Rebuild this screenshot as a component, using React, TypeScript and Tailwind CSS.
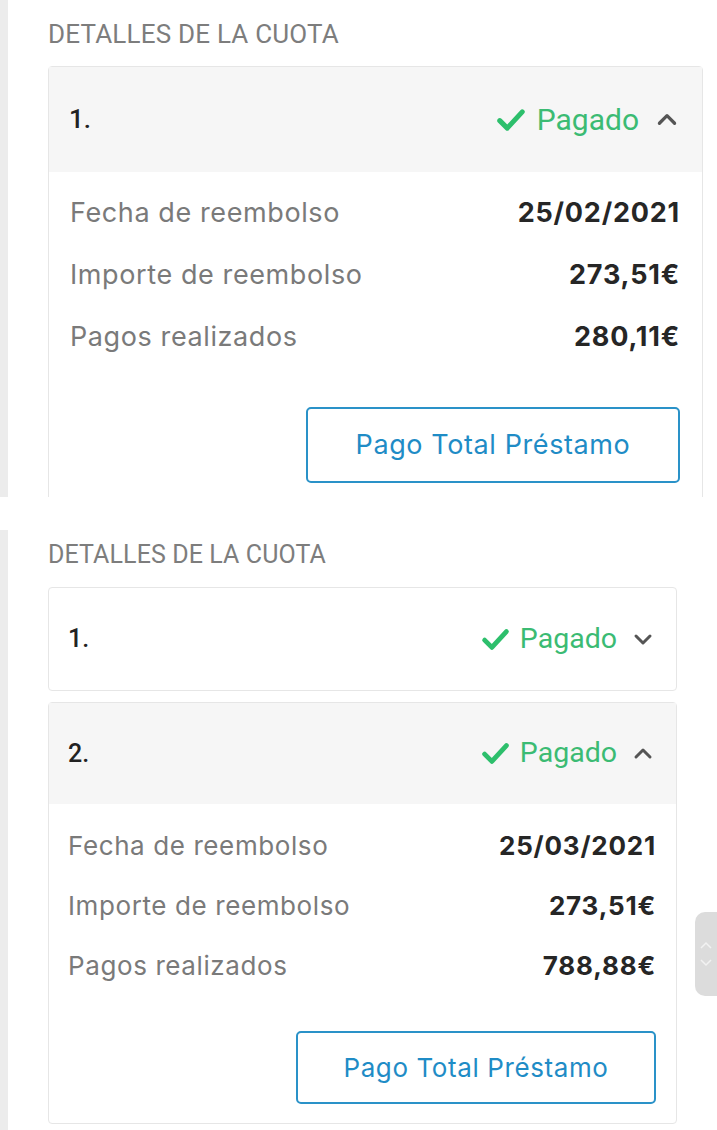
import React from "react";

type Row = { label: string; value: string };

function Check({ size }: { size: number }) {
  return (
    <svg width={size} height={size} viewBox="0 0 24 24" fill="none">
      <path d="M3 12.5l6 6L21 5.5" stroke="#2dbf6c" strokeWidth="4" strokeLinecap="round" strokeLinejoin="round" />
    </svg>
  );
}

function Chevron({ up, size }: { up: boolean; size: number }) {
  return (
    <svg width={size} height={size} viewBox="0 0 24 24" fill="none">
      <path
        d={up ? "M5 15l7-7 7 7" : "M5 9l7 7 7-7"}
        stroke="#555555"
        strokeWidth="3"
        strokeLinecap="round"
        strokeLinejoin="round"
      />
    </svg>
  );
}

const roboto = "font-['Roboto','Liberation_Sans',sans-serif]";
const inter = "font-['Inter','Noto_Sans',sans-serif]";

function TopSection({ rows }: { rows: Row[] }) {
  return (
    <section className="flex h-[497px] overflow-hidden">
      <div className="w-[8px] shrink-0 bg-[#ececec]" />
      <div className="flex-1 pl-[40px] pr-[14px] pt-[20px]">
        <h2 className={`${roboto} h-[28px] text-[26px] leading-[28px] tracking-[0.2px] text-[#7d7d7d]`}>
          DETALLES DE LA CUOTA
        </h2>
        <div className="mt-[18px] rounded-[4px] border border-[#e6e6e6]">
          <div className="flex h-[105px] items-center justify-between bg-[#f6f6f6] pl-[20px] pr-[22px]">
            <span className={`${roboto} text-[26px] font-medium text-[#222]`}>1.</span>
            <div className="flex items-center">
              <Check size={30} />
              <span className={`${roboto} ml-[11px] text-[30px] text-[#3bbb73]`}>Pagado</span>
              <span className="ml-[15px]">
                <Chevron up size={26} />
              </span>
            </div>
          </div>
          <div className="pl-[21px] pr-[22px] pt-[10px] pb-[20px]">
            {rows.map((r) => (
              <div key={r.label} className={`${inter} flex h-[62px] items-center justify-between`}>
                <span className="text-[27px] tracking-[0.6px] text-[#7a7a7a]">{r.label}</span>
                <span className="text-[27px] font-bold tracking-[0.8px] text-[#262626]">{r.value}</span>
              </div>
            ))}
            <div className="mt-[39px] flex justify-end">
              <button
                className={`${inter} h-[76px] w-[374px] rounded-[5px] border-2 border-[#2a92c8] text-[27px] tracking-[0.6px] text-[#1f8cc6]`}
              >
                Pago Total Préstamo
              </button>
            </div>
          </div>
        </div>
      </div>
    </section>
  );
}

function BottomSection({ rows }: { rows: Row[] }) {
  return (
    <section className="relative flex h-[600px]">
      <div className="w-[8px] shrink-0 bg-[#ececec]" />
      <div className="flex-1 pl-[40px] pr-[40px] pt-[11px]">
        <h2 className={`${roboto} h-[28px] text-[25px] leading-[28px] tracking-[0.1px] text-[#7d7d7d]`}>
          DETALLES DE LA CUOTA
        </h2>
        <div className="mt-[18px] flex h-[104px] items-center justify-between rounded-[4px] border border-[#e6e6e6] bg-white pl-[19px] pr-[21px]">
          <span className={`${roboto} text-[25px] font-medium text-[#222]`}>1.</span>
          <div className="flex items-center">
            <Check size={29} />
            <span className={`${roboto} ml-[10px] text-[28.5px] text-[#3bbb73]`}>Pagado</span>
            <span className="ml-[14px]">
              <Chevron up={false} size={24} />
            </span>
          </div>
        </div>
        <div className="mt-[11px] rounded-[4px] border border-[#e6e6e6]">
          <div className="flex h-[101px] items-center justify-between bg-[#f6f6f6] pl-[19px] pr-[21px]">
            <span className={`${roboto} text-[25px] font-medium text-[#222]`}>2.</span>
            <div className="flex items-center">
              <Check size={29} />
              <span className={`${roboto} ml-[10px] text-[28.5px] text-[#3bbb73]`}>Pagado</span>
              <span className="ml-[14px]">
                <Chevron up size={24} />
              </span>
            </div>
          </div>
          <div className="pl-[19px] pr-[20px] pt-[11px] pb-[19px]">
            {rows.map((r) => (
              <div key={r.label} className={`${inter} flex h-[60px] items-center justify-between`}>
                <span className="text-[26px] tracking-[0.6px] text-[#7a7a7a]">{r.label}</span>
                <span className="text-[26px] font-bold tracking-[0.8px] text-[#262626]">{r.value}</span>
              </div>
            ))}
            <div className="mt-[36px] flex justify-end">
              <button
                className={`${inter} h-[73px] w-[360px] rounded-[5px] border-2 border-[#2a92c8] text-[26px] tracking-[0.6px] text-[#1f8cc6]`}
              >
                Pago Total Préstamo
              </button>
            </div>
          </div>
        </div>
      </div>
      <div className="absolute right-0 top-[382px] flex h-[84px] w-[22px] flex-col items-center justify-center gap-[10px] rounded-l-[10px] bg-[#dcdcdc]">
        <svg width="12" height="8" viewBox="0 0 12 8" fill="none">
          <path d="M1 7l5-5 5 5" stroke="#f2f2f2" strokeWidth="1.5" />
        </svg>
        <svg width="12" height="8" viewBox="0 0 12 8" fill="none">
          <path d="M1 1l5 5 5-5" stroke="#f2f2f2" strokeWidth="1.5" />
        </svg>
      </div>
    </section>
  );
}

export default function App() {
  const first: Row[] = [
    { label: "Fecha de reembolso", value: "25/02/2021" },
    { label: "Importe de reembolso", value: "273,51€" },
    { label: "Pagos realizados", value: "280,11€" },
  ];
  const second: Row[] = [
    { label: "Fecha de reembolso", value: "25/03/2021" },
    { label: "Importe de reembolso", value: "273,51€" },
    { label: "Pagos realizados", value: "788,88€" },
  ];

  return (
    <div className="h-[1130px] w-[717px] overflow-hidden bg-white">
      <TopSection rows={first} />
      <div className="h-[33px]" />
      <BottomSection rows={second} />
    </div>
  );
}
